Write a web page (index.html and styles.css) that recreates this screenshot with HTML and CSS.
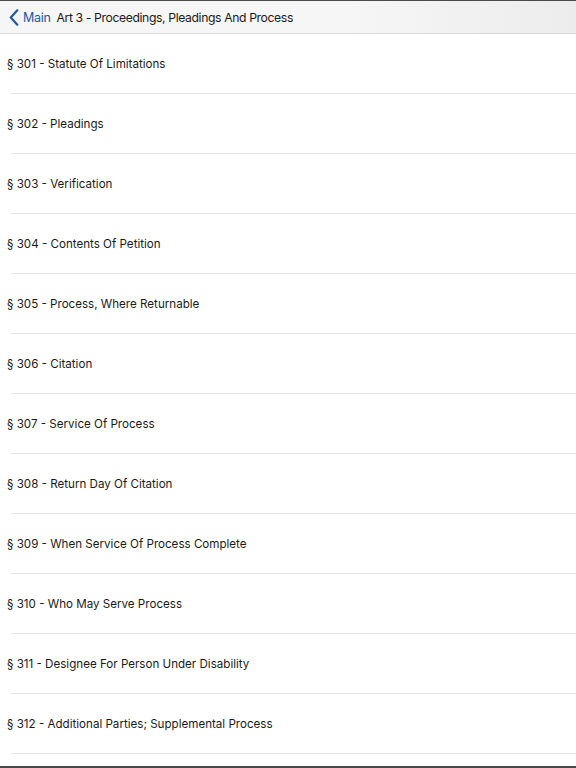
FILE: index.html
```html
<!DOCTYPE html>
<html>
<head>
<meta charset="utf-8">
<link rel="stylesheet" href="styles.css">
</head>
<body>
<div class="screen">
  <header class="navbar">
    <a class="back">
      <svg class="chev" width="10" height="17" viewBox="0 0 10 17"><path d="M8.3 1.3 L1.8 8.5 L8.3 15.7" fill="none" stroke="#1d5a9e" stroke-width="2.2" stroke-linecap="round" stroke-linejoin="round"/></svg>
      <span class="back-label">Main</span>
    </a>
    <span class="title">Art 3 - Proceedings, Pleadings And Process</span>
  </header>
  <ul class="list">
    <li class="row"><span>§ 301 - Statute Of Limitations</span></li>
    <li class="row"><span>§ 302 - Pleadings</span></li>
    <li class="row"><span>§ 303 - Verification</span></li>
    <li class="row"><span>§ 304 - Contents Of Petition</span></li>
    <li class="row"><span>§ 305 - Process, Where Returnable</span></li>
    <li class="row"><span>§ 306 - Citation</span></li>
    <li class="row"><span>§ 307 - Service Of Process</span></li>
    <li class="row"><span>§ 308 - Return Day Of Citation</span></li>
    <li class="row"><span>§ 309 - When Service Of Process Complete</span></li>
    <li class="row"><span>§ 310 - Who May Serve Process</span></li>
    <li class="row"><span>§ 311 - Designee For Person Under Disability</span></li>
    <li class="row"><span>§ 312 - Additional Parties; Supplemental Process</span></li>
  </ul>
  <div class="bottom"></div>
</div>
</body>
</html>
```
FILE: styles.css
```css
html, body {
  margin: 0;
  padding: 0;
  background: #ffffff;
}
.screen {
  width: 576px;
  height: 768px;
  display: flex;
  flex-direction: column;
  font-family: "Inter", "Liberation Sans", sans-serif;
  color: #1a1a1a;
  overflow: hidden;
  border-top: 1px solid #4a4a4a;
  box-sizing: border-box;
}
.navbar {
  height: 32px;
  flex: none;
  display: flex;
  align-items: center;
  background: linear-gradient(to right, #f6f6f6 0%, #f6f6f6 60%, #ececec 100%);
  border-bottom: 1px solid #dcdcdc;
}
.back {
  display: flex;
  align-items: center;
  padding-left: 9px;
  color: #1d5a9e;
}
.chev {
  display: block;
}
.back-label {
  margin-left: 4px;
  font-size: 12.5px;
  letter-spacing: -0.3px;
  color: #1d5a9e;
}
.title {
  margin-left: 6px;
  font-size: 12.2px;
  letter-spacing: -0.38px;
  color: #1a1a1a;
  font-weight: 400;
}
.list {
  list-style: none;
  margin: 0;
  padding: 0;
  flex: none;
}
.row {
  height: 60px;
  box-sizing: border-box;
  padding-bottom: 1px;
  display: flex;
  align-items: center;
  padding-left: 7px;
  font-size: 11.6px;
  background-image: linear-gradient(#e6e6e6, #e6e6e6);
  background-repeat: no-repeat;
  background-size: calc(100% - 11px) 1px;
  background-position: 11px 100%;
}
.bottom {
  flex: 1;
  border-bottom: 2px solid #4a4a4a;
}
```
